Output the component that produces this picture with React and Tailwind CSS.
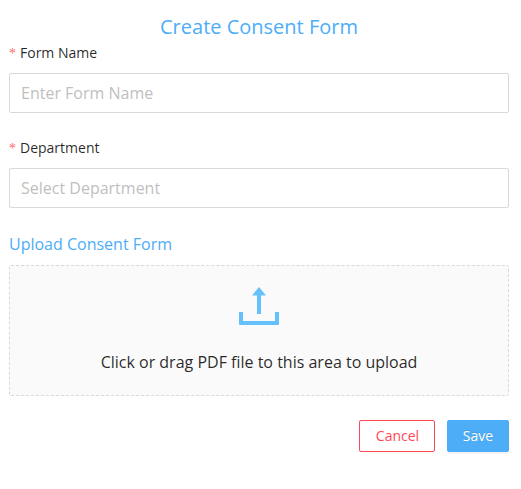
function UploadIcon() {
  return (
    <svg className="mt-[21px] block h-[38px] w-10" viewBox="0 0 40 38" fill="#64c1fb" aria-hidden="true">
      <path d="M20 0.1 L26.6 7.9 V8.5 H22 V27 H18 V8.5 H13.4 V7.9 Z" />
      <path d="M0 25 H4 V34 H36 V25 H40 V37 Q40 38 39 38 H1 Q0 38 0 37 Z" />
    </svg>
  );
}

function Field({ label, placeholder }) {
  return (
    <label className="block h-[95px]">
      <span className="flex h-[32px] items-start pt-[1px] text-[14px] leading-[22px] text-black/85">
        <span className="mr-1 w-[7px] pt-[1px] font-['Liberation_Serif',serif] text-[14px] text-[#ff6b6d]">*</span>
        {label}
      </span>
      <input
        className="block h-10 w-full rounded-[2px] border border-[#d9d9d9] bg-white px-[11px] text-[16px] text-black/85 outline-none placeholder:text-[#bfbfbf]"
        placeholder={placeholder}
      />
    </label>
  );
}

export default function App() {
  return (
    <form className="h-[489px] w-[521px] bg-white pt-3 pr-3 pl-[9px] font-['Open_Sans',sans-serif]">
      <h1 className="h-[29px] text-center text-[20px] leading-[30px] text-[#4dadf7]">Create Consent Form</h1>
      <Field label="Form Name" placeholder="Enter Form Name" />
      <Field label="Department" placeholder="Select Department" />
      <h2 className="h-[34px] pt-[1px] text-[16px] leading-[24px] text-[#4dadf7]">Upload Consent Form</h2>
      <div className="flex h-[131px] flex-col items-center rounded-[2px] border border-dashed border-[#d9d9d9] bg-[#fafafa]">
        <UploadIcon />
        <p className="mt-[25px] text-[16px] leading-[24px] text-black/85">Click or drag PDF file to this area to upload</p>
      </div>
      <div className="mt-6 flex justify-end gap-3">
        <button type="button" className="h-8 w-[76px] rounded-[2px] border border-[#ff4757] bg-white pl-[1px] text-[14px] leading-[22px] text-[#ff4757]">
          Cancel
        </button>
        <button type="button" className="h-8 w-[62px] rounded-[2px] border border-[#4dadf7] bg-[#4dadf7] text-[14px] leading-[22px] text-white shadow-[0_2px_0_rgba(0,0,0,0.045)] [text-shadow:0_-1px_0_rgba(0,0,0,0.12)]">
          Save
        </button>
      </div>
    </form>
  );
}
